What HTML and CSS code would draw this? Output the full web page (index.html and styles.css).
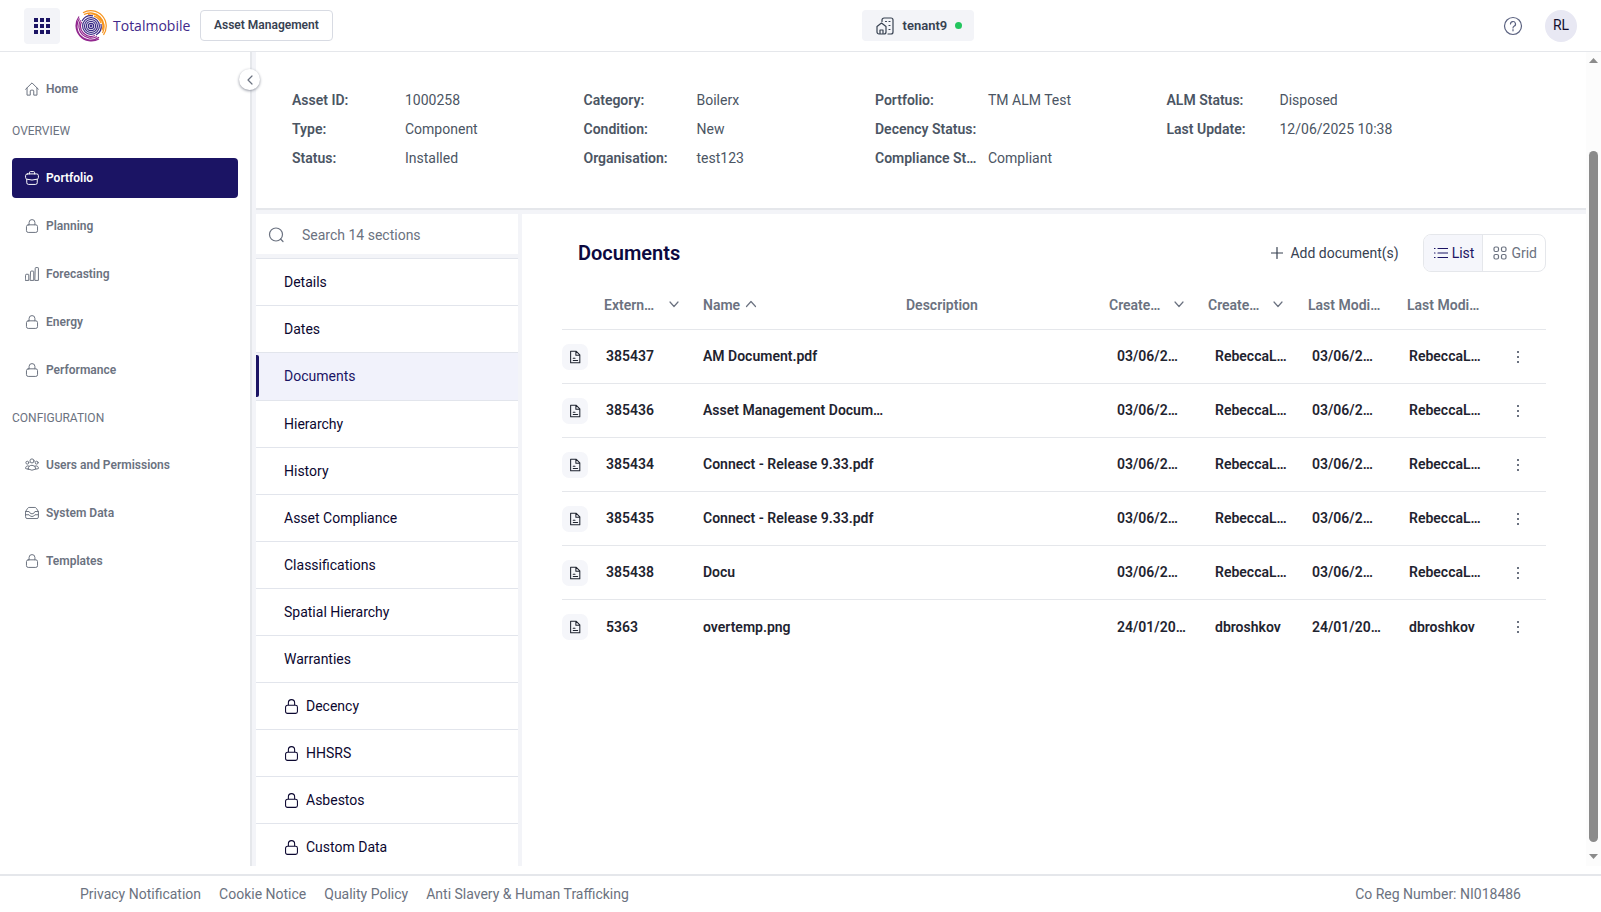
FILE: index.html
```html
<!DOCTYPE html>
<html lang="en">
<head>
<meta charset="utf-8">
<title>Asset Management - Documents</title>
<link rel="stylesheet" href="styles.css">
</head>
<body>
<svg class="sprite" aria-hidden="true">
  <symbol id="lock" viewBox="0 0 24 24"><path d="M7 10V6a5 5 0 0 1 10 0v4M5.500 10h13a3 3 0 0 1 3 3v7a3 3 0 0 1-3 3h-13a3 3 0 0 1-3-3v-7a3 3 0 0 1 3-3z"/></symbol>
  <symbol id="home" viewBox="0 0 24 24"><path d="M1 12.500 12 1.500l11 11M3.500 10.500V22.500h5.500v-7a1.500 1.500 0 0 1 1.500-1.500h3a1.500 1.500 0 0 1 1.500 1.500v7h5.500V10.500"/></symbol>
  <symbol id="briefcase" viewBox="0 0 24 24"><path d="M7.500 5V3a2 2 0 0 1 2-2h5a2 2 0 0 1 2 2v2M4 5h16a3 3 0 0 1 3 3v3a3 3 0 0 1-2 3Q12 17 3 14a3 3 0 0 1-2-3V8a3 3 0 0 1 3-3zM3 14.500V20a3 3 0 0 0 3 3h12a3 3 0 0 0 3-3v-5.500"/></symbol>
  <symbol id="bars" viewBox="0 0 24 24"><path d="M1 13.500a1 1 0 0 1 1-1h3.500a1 1 0 0 1 1 1V23H1zM9.500 8a1 1 0 0 1 1-1H14a1 1 0 0 1 1 1v15H9.500zM17.500 2a1 1 0 0 1 1-1H22a1 1 0 0 1 1 1v21h-5.500z"/></symbol>
  <symbol id="users" viewBox="0 0 24 24"><circle cx="12" cy="5" r="3.500"/><circle cx="4" cy="8" r="2.500"/><circle cx="20" cy="8" r="2.500"/><path d="M5.500 19a6.500 6.500 0 0 1 13 0q-6.500 4-13 0zM5.500 19Q3 19 1 18a4 4 0 0 1 6-4M18.500 19q2.500 0 4.500-1a4 4 0 0 0-6-4"/></symbol>
  <symbol id="inbox" viewBox="0 0 24 24"><path d="M1 9.500 4.500 4Q5.500 2.500 7 2.500h10q1.500 0 2.500 1.500L23 9.500V19a2.500 2.500 0 0 1-2.500 2.500h-17A2.500 2.500 0 0 1 1 19zM1 9.500h6q1.500 4 5 4t5-4h6M1 15h6q1.500 3 5 3t5-3h6"/></symbol>
  <symbol id="down" viewBox="0 0 12 12"><path d="m2 3 4 4.500L10 3"/></symbol>
  <symbol id="file" viewBox="0 0 16 16"><path d="M3 1.500h6.500l4 4v9H3zM9 2v4h4M6 9.500h2M6 12h5"/></symbol>
  <symbol id="dots" viewBox="0 0 16 16"><path d="M7 2h2v2H7zM7 7h2v2H7zM7 12h2v2H7z"/></symbol>
</svg>

<header class="topbar">
  <div class="brand">
    <button class="apps" aria-label="Apps"><svg viewBox="0 0 16 16" width="16" height="16"><path fill="#1b1464" d="M0 0h4v4H0zM6 0h4v4H6zM12 0h4v4h-4zM0 6h4v4H0zM6 6h4v4H6zM12 6h4v4h-4zM0 12h4v4H0zM6 12h4v4H6zM12 12h4v4h-4z"/></svg></button>
    <a class="logo" href="#">
      <svg viewBox="0 0 32 32" width="32" height="32" fill="none" stroke-width="1.200">
        <g stroke="#3a2a86"><circle cx="16" cy="16" r=".8"/><circle cx="16" cy="16" r="2.700"/><circle cx="16" cy="16" r="4.600"/><circle cx="16" cy="16" r="6.500"/><circle cx="16" cy="16" r="8.400"/><path d="M7 11a10.300 10.300 0 0 1 11-5.100M26 14a10.300 10.300 0 0 1-5 11"/></g>
        <g stroke="#f7941d"><path d="M8 2.800a15.400 15.400 0 0 1 20.500 22M9 4.500a13.700 13.700 0 0 1 18.500 18.500M13 4.400a12 12 0 0 1 14 16M19 6.100a10.300 10.300 0 0 1 7 7"/></g>
        <g stroke="#92278f"><path d="M4 6.500a15.400 15.400 0 0 0 20 22.500M4.500 8.500a13.700 13.700 0 0 0 19.500 18.800M5.500 10.200A12 12 0 0 0 22 26.500M6.500 11.800A10.300 10.300 0 0 0 20 25.500"/></g>
      </svg>
      <span>Totalmobile</span>
    </a>
    <button class="product">Asset Management</button>
  </div>
  <button class="tenant">
    <svg class="icon" viewBox="0 0 18 18" width="18" height="18"><path d="M1 9.500 5.500 6 10 9.500V15a2 2 0 0 1-2 2H3a2 2 0 0 1-2-2zM4 17v-4h3v4M6 4.500V3a2 2 0 0 1 2-2h7a2 2 0 0 1 2 2v12a2 2 0 0 1-2 2h-3M9.500 4.500h1M13 4.500h1M13 8.500h1M13 12.500h1"/></svg>
    <span>tenant9</span><i class="online"></i>
  </button>
  <div class="account">
    <button class="help" aria-label="Help"><svg class="icon" viewBox="0 0 20 20" width="20" height="20"><circle cx="10" cy="10" r="8.500"/><path d="M7.500 8a2.500 2.500 0 1 1 3.500 2.300q-1 .5-1 1.700M10 13.500v1.300"/></svg></button>
    <button class="avatar">RL</button>
  </div>
</header>

<div class="body">
  <nav class="sidebar">
    <a class="nav" href="#"><svg class="icon"><use href="#home"/></svg>Home</a>
    <h2 class="group first">OVERVIEW</h2>
    <div class="links">
      <a class="nav current" href="#"><svg class="icon"><use href="#briefcase"/></svg>Portfolio</a>
      <a class="nav" href="#"><svg class="icon"><use href="#lock"/></svg>Planning</a>
      <a class="nav" href="#"><svg class="icon"><use href="#bars"/></svg>Forecasting</a>
      <a class="nav" href="#"><svg class="icon"><use href="#lock"/></svg>Energy</a>
      <a class="nav" href="#"><svg class="icon"><use href="#lock"/></svg>Performance</a>
    </div>
    <h2 class="group">CONFIGURATION</h2>
    <div class="links">
      <a class="nav" href="#"><svg class="icon"><use href="#users"/></svg>Users and Permissions</a>
      <a class="nav" href="#"><svg class="icon"><use href="#inbox"/></svg>System Data</a>
      <a class="nav" href="#"><svg class="icon"><use href="#lock"/></svg>Templates</a>
    </div>
    <button class="collapse" aria-label="Collapse menu"><svg class="icon" viewBox="0 0 12 12" width="12" height="12"><path d="M8 2 4 6l4 4"/></svg></button>
  </nav>

  <main class="content">
    <section class="summary">
      <dl><div><dt>Asset ID:</dt><dd>1000258</dd></div><div><dt>Type:</dt><dd>Component</dd></div><div><dt>Status:</dt><dd>Installed</dd></div></dl>
      <dl><div><dt>Category:</dt><dd>Boilerx</dd></div><div><dt>Condition:</dt><dd>New</dd></div><div><dt>Organisation:</dt><dd>test123</dd></div></dl>
      <dl><div><dt>Portfolio:</dt><dd>TM ALM Test</dd></div><div><dt>Decency Status:</dt><dd></dd></div><div><dt>Compliance St…</dt><dd>Compliant</dd></div></dl>
      <dl><div><dt>ALM Status:</dt><dd>Disposed</dd></div><div><dt>Last Update:</dt><dd>12/06/2025 10:38</dd></div></dl>
    </section>
    <div class="panes">
      <div class="sections">
        <label class="search">
          <svg class="icon" viewBox="0 0 16 16" width="16" height="16"><circle cx="8" cy="7.500" r="6.500"/><path d="m12.500 12 2.500 2.500"/></svg>
          <input type="search" placeholder="Search 14 sections" aria-label="Search sections">
        </label>
        <div class="list">
          <a href="#">Details</a>
          <a href="#">Dates</a>
          <a href="#" class="active">Documents</a>
          <a href="#">Hierarchy</a>
          <a href="#">History</a>
          <a href="#">Asset Compliance</a>
          <a href="#">Classifications</a>
          <a href="#">Spatial Hierarchy</a>
          <a href="#">Warranties</a>
          <a href="#"><svg class="icon"><use href="#lock"/></svg>Decency</a>
          <a href="#"><svg class="icon"><use href="#lock"/></svg>HHSRS</a>
          <a href="#"><svg class="icon"><use href="#lock"/></svg>Asbestos</a>
          <a href="#"><svg class="icon"><use href="#lock"/></svg>Custom Data</a>
        </div>
      </div>
      <section class="documents">
        <div class="bar">
          <h1>Documents</h1>
          <button class="add"><svg class="icon" viewBox="0 0 12 12" width="12" height="12"><path d="M6 .5v11M.5 6h11"/></svg>Add document(s)</button>
          <div class="toggle">
            <button class="on"><svg class="icon" viewBox="0 0 14 14" width="14" height="14"><path d="M4 2.500h9.500M4 7h9.500M4 11.500h9.500M.5 2.500H1M.5 7H1M.5 11.500H1"/></svg>List</button>
            <button><svg class="icon" viewBox="0 0 14 14" width="14" height="14"><rect x="1" y="1" width="4.500" height="4.500" rx="1.500"/><rect x="8.500" y="1" width="4.500" height="4.500" rx="1.500"/><rect x="1" y="8.500" width="4.500" height="4.500" rx="1.500"/><rect x="8.500" y="8.500" width="4.500" height="4.500" rx="1.500"/></svg>Grid</button>
          </div>
        </div>
        <table>
          <thead><tr>
            <th></th>
            <th><span>Extern…</span><svg class="icon"><use href="#down"/></svg></th>
            <th class="sorted"><span>Name</span><svg class="icon" viewBox="0 0 12 12"><path d="m1.500 7.500 4.500-5 4.500 5"/></svg></th>
            <th>Description</th>
            <th><span>Create…</span><svg class="icon"><use href="#down"/></svg></th>
            <th><span>Create…</span><svg class="icon"><use href="#down"/></svg></th>
            <th>Last Modi…</th>
            <th>Last Modi…</th>
            <th></th>
          </tr></thead>
          <tbody>
            <tr><td><i class="file"><svg class="icon"><use href="#file"/></svg></i></td><td>385437</td><td>AM Document.pdf</td><td></td><td>03/06/2…</td><td>RebeccaL…</td><td>03/06/2…</td><td>RebeccaL…</td><td><button class="more" aria-label="More"><svg><use href="#dots"/></svg></button></td></tr>
            <tr><td><i class="file"><svg class="icon"><use href="#file"/></svg></i></td><td>385436</td><td>Asset Management Docum…</td><td></td><td>03/06/2…</td><td>RebeccaL…</td><td>03/06/2…</td><td>RebeccaL…</td><td><button class="more" aria-label="More"><svg><use href="#dots"/></svg></button></td></tr>
            <tr><td><i class="file"><svg class="icon"><use href="#file"/></svg></i></td><td>385434</td><td>Connect - Release 9.33.pdf</td><td></td><td>03/06/2…</td><td>RebeccaL…</td><td>03/06/2…</td><td>RebeccaL…</td><td><button class="more" aria-label="More"><svg><use href="#dots"/></svg></button></td></tr>
            <tr><td><i class="file"><svg class="icon"><use href="#file"/></svg></i></td><td>385435</td><td>Connect - Release 9.33.pdf</td><td></td><td>03/06/2…</td><td>RebeccaL…</td><td>03/06/2…</td><td>RebeccaL…</td><td><button class="more" aria-label="More"><svg><use href="#dots"/></svg></button></td></tr>
            <tr><td><i class="file"><svg class="icon"><use href="#file"/></svg></i></td><td>385438</td><td>Docu</td><td></td><td>03/06/2…</td><td>RebeccaL…</td><td>03/06/2…</td><td>RebeccaL…</td><td><button class="more" aria-label="More"><svg><use href="#dots"/></svg></button></td></tr>
            <tr><td><i class="file"><svg class="icon"><use href="#file"/></svg></i></td><td>5363</td><td>overtemp.png</td><td></td><td>24/01/20…</td><td>dbroshkov</td><td>24/01/20…</td><td>dbroshkov</td><td><button class="more" aria-label="More"><svg><use href="#dots"/></svg></button></td></tr>
          </tbody>
        </table>
      </section>
    </div>
  </main>
  <div class="scrollbar" aria-hidden="true">
    <svg viewBox="0 0 15 16"><path d="M3 11 7.500 6l4.500 5z"/></svg>
    <div class="track"></div>
    <div class="thumb"></div>
    <svg class="end" viewBox="0 0 15 16"><path d="m3 4 4.500 5L12 4z"/></svg>
  </div>
</div>

<footer class="footer">
  <a href="#">Privacy Notification</a>
  <a href="#">Cookie Notice</a>
  <a href="#">Quality Policy</a>
  <a href="#">Anti Slavery &amp; Human Trafficking</a>
  <span>Co Reg Number: NI018486</span>
</footer>
</body>
</html>
```

FILE: styles.css
```css
* { box-sizing: border-box; }

body {
  margin: 0;
  height: 100vh;
  display: flex;
  flex-direction: column;
  overflow: hidden;
  background: #fff;
  color: #4b5563;
  font-family: Roboto, "Liberation Sans", sans-serif;
  font-size: 14px;
  line-height: 21px;
}

button, input { font: inherit; color: inherit; background: none; border: 0; padding: 0; margin: 0; }
button { cursor: pointer; display: flex; align-items: center; }
a { color: inherit; text-decoration: none; }
svg { display: block; flex: none; }
.icon { fill: none; stroke: currentColor; stroke-width: 1.2; stroke-linecap: round; stroke-linejoin: round; }
.sprite { display: none; }

/* Top bar */
.topbar {
  flex: none;
  height: 52px;
  padding: 0 24px;
  display: flex;
  align-items: center;
  justify-content: space-between;
  border-bottom: 1px solid #e5e7eb;
}
.brand { display: flex; align-items: center; }
.apps { width: 36px; height: 36px; justify-content: center; border-radius: 4px; background: #f3f4f8; }
.logo {
  display: flex;
  align-items: center;
  gap: 6px;
  width: 125px;
  margin: 0 0 0 15px;
  color: #41298a;
  font-family: "Open Sans", sans-serif;
  font-size: 14px;
  white-space: nowrap;
}
.product {
  height: 31px;
  padding: 0 13px;
  border: 1px solid #d8dbe3;
  border-radius: 4px;
  color: #374151;
  font-size: 12px;
  font-weight: 600;
}
.tenant {
  height: 31px;
  padding: 0 12px 0 14px;
  border-radius: 4px;
  background: #f3f4f8;
  color: #374151;
  font-size: 13px;
  font-weight: 600;
}
.tenant span { margin: 0 8px 0 9px; }
.online { width: 7px; height: 7px; border-radius: 50%; background: #22c55e; }
.account { display: flex; align-items: center; gap: 22px; color: #5b6280; }
.avatar { width: 32px; height: 32px; justify-content: center; border-radius: 50%; background: #e8e8f3; color: #14102e; }

.body { flex: 1; min-height: 0; display: flex; margin-bottom: 8px; }

/* Sidebar */
.sidebar {
  position: relative;
  flex: none;
  width: 252px;
  padding: 17px 12px 0;
  border-right: 2px solid #e5e7eb;
  color: #6b7280;
  font-size: 12px;
}
.links { display: flex; flex-direction: column; gap: 8px; }
.nav { display: flex; align-items: center; gap: 7px; height: 40px; padding: 0 13px; border-radius: 4px; font-weight: 600; }
.nav .icon { width: 14px; height: 14px; stroke-width: 1.7; }
.nav.current { background: #1b1464; color: #fff; }
.group { height: 28px; margin: 14px 0 13px; font-size: 12px; font-weight: 400; line-height: 28px; }
.group.first { margin-top: 8px; }
.collapse {
  position: absolute;
  top: 17px;
  right: -10px;
  width: 21px;
  height: 21px;
  justify-content: center;
  border-radius: 50%;
  background: #fff;
  box-shadow: 0 1px 3px #8c909c;
}

/* Asset summary */
.content { flex: 1; min-width: 0; display: flex; flex-direction: column; padding-left: 4px; background: #f3f4f8; }
.summary {
  flex: none;
  display: grid;
  grid-template-columns: repeat(4, 1fr);
  height: 158px;
  padding: 38px 128px 0 36px;
  border-bottom: 2px solid #e5e7eb;
  background: #fff;
}
.summary dl { display: flex; flex-direction: column; gap: 8px; margin: 0; }
.summary dl div { display: grid; grid-template-columns: 105px 1fr; column-gap: 8px; white-space: nowrap; }
.summary dt { font-weight: 600; }
.summary dd { margin: 0; }

.panes { flex: 1; min-height: 0; display: flex; gap: 4px; padding-top: 4px; }

/* Section list */
.sections { flex: none; width: 262px; display: flex; flex-direction: column; gap: 4px; overflow: hidden; }
.search { flex: none; display: flex; align-items: center; gap: 18px; height: 40px; padding: 2px 12px 0; background: #fff; color: #6b7280; }
.search input { flex: 1; min-width: 0; outline: 0; }
.search input::placeholder { color: #6b7280; opacity: 1; }
.list { flex: 1; background: #fff; color: #0b0730; }
.list a { display: flex; align-items: center; gap: 7px; height: 47px; padding: 0 28px; border-top: 1px solid #e2e5ec; }
.list .icon { width: 15px; height: 15px; stroke-width: 1.7; }
.list .active { position: relative; height: 48px; background: #f1f2fb; color: #1b1464; }
.list .active::before { content: ""; position: absolute; left: 0; top: 2px; bottom: 3px; width: 3px; border-radius: 0 2px 2px 0; background: #1b1464; }

/* Documents */
.documents { flex: 1; min-width: 0; padding: 20px 40px 0; background: #fff; }
.bar { display: flex; align-items: center; height: 38px; padding-left: 16px; }
.bar h1 { margin: 0 auto 0 0; color: #0c0840; font-size: 20px; font-weight: 600; line-height: 28px; }
.add { gap: 7px; margin-right: 24px; color: #374151; }
.toggle { display: flex; height: 38px; overflow: hidden; border: 1px solid #e5e7eb; border-radius: 8px; color: #6b7280; }
.toggle button { gap: 4px; padding: 0 8px 0 10px; }
.toggle .on { border-right: 1px solid #e5e7eb; background: #f5f6fb; color: #1b1464; }

table, thead, tbody { display: block; }
tr { display: grid; align-items: center; border-bottom: 1px solid #e5e7eb; }
thead tr {
  grid-template-columns: 42px 99fr 203fr 203fr 99fr 100fr 99fr 99fr 40px;
  height: 58px;
  padding-top: 9px;
  color: #6b7280;
}
tbody tr { grid-template-columns: 44px 97fr 203fr 211fr 98fr 97fr 97fr 97fr 40px; height: 54px; color: #1f2430; }
tbody tr:last-child { border-bottom: 0; }
th, td { display: flex; align-items: center; min-width: 0; padding: 0; font-weight: 600; text-align: left; white-space: nowrap; }
th span { width: 64px; }
th .icon { width: 12px; height: 12px; }
.sorted { gap: 5px; }
.sorted span { width: auto; }
.file { display: grid; place-items: center; width: 26px; height: 26px; border-radius: 7px; background: #f5f6fa; }
.file .icon { width: 14px; height: 14px; }
.more { width: 24px; height: 24px; justify-content: center; color: #6b7280; }
.more svg { width: 16px; height: 16px; fill: currentColor; }

/* Page scrollbar */
.scrollbar { flex: none; width: 15px; display: flex; flex-direction: column; background: #fcfcfc; fill: #8b8b8b; }
.scrollbar svg { width: 15px; height: 16px; }
.scrollbar .end { margin-top: 8px; }
.track { flex: 83; }
.thumb { flex: 691; width: 9px; margin: 0 auto; border-radius: 5px; background: #8b8b8b; }

.footer {
  flex: none;
  display: flex;
  align-items: center;
  gap: 18px;
  height: 38px;
  padding: 0 80px;
  border-top: 2px solid #e5e7eb;
  color: #6b7280;
}
.footer span { margin-left: auto; }
```
